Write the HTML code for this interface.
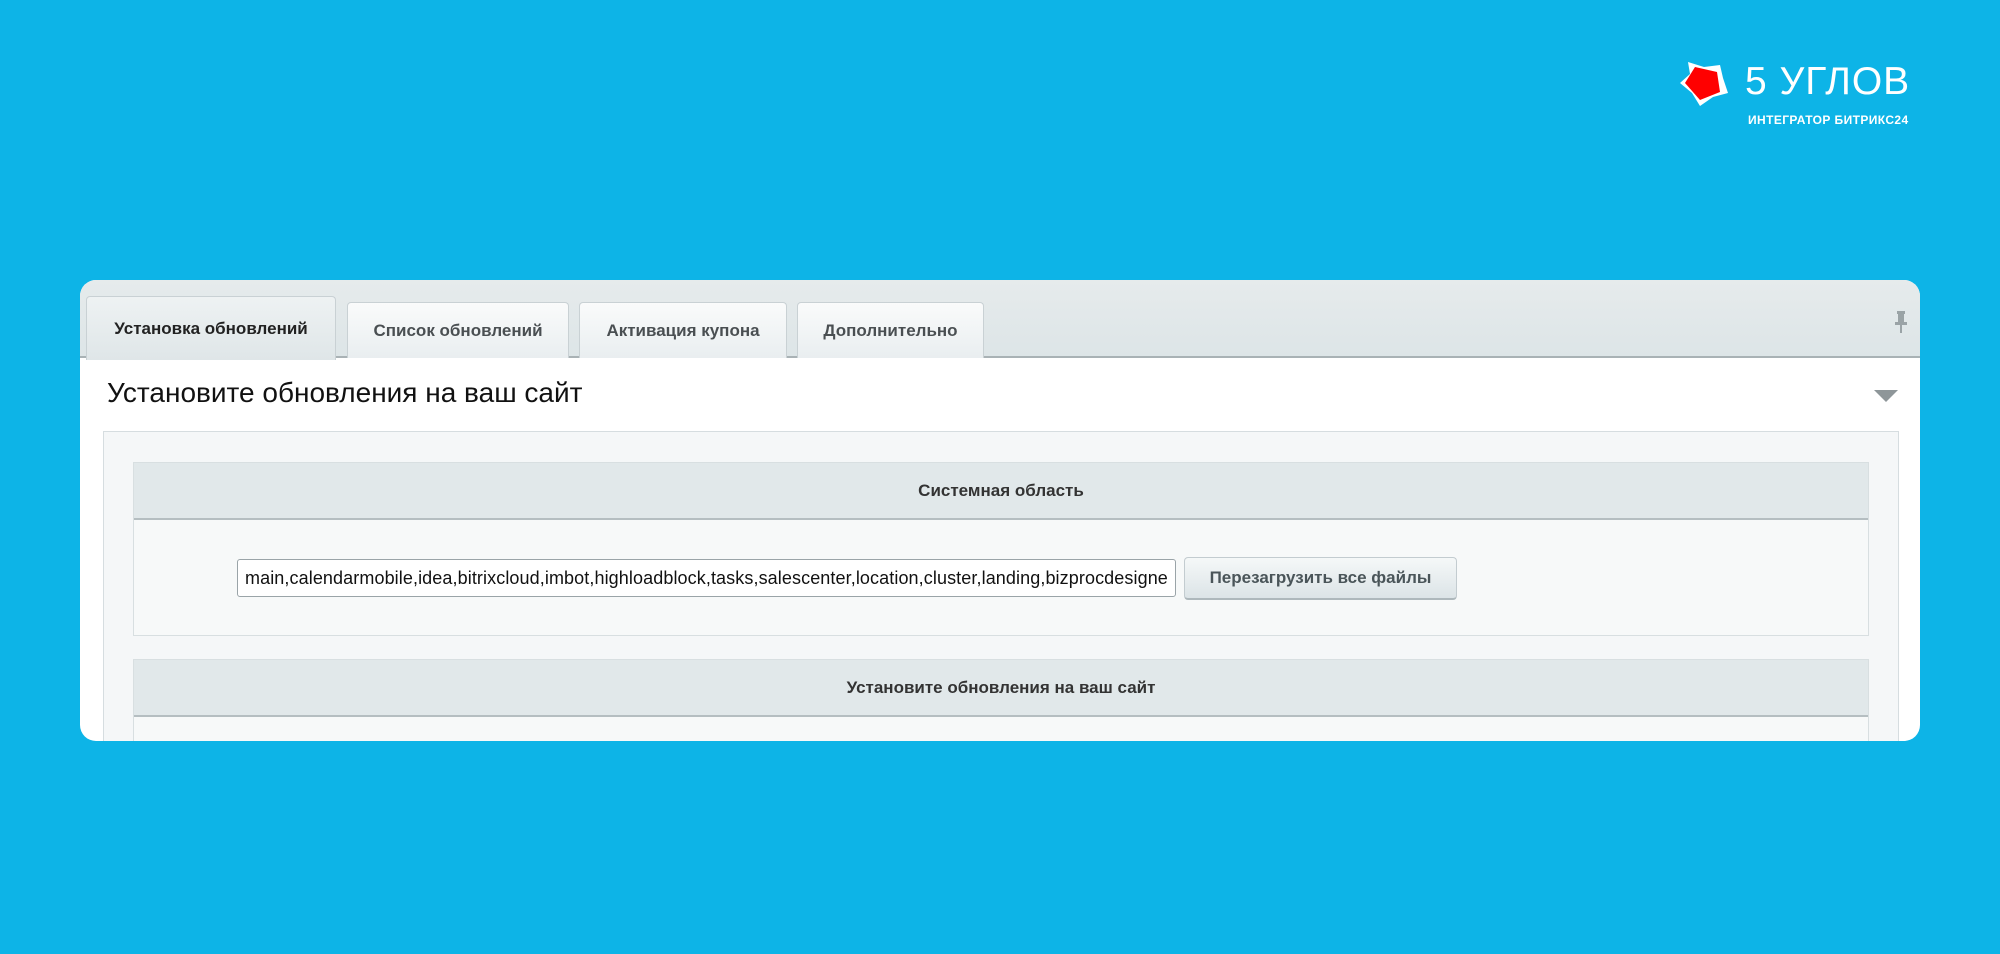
<!DOCTYPE html>
<html><head><meta charset="utf-8"><style>
*{margin:0;padding:0;box-sizing:border-box}
body{width:2000px;height:954px;background:#0db4e7;position:relative;overflow:hidden;font-family:"Liberation Sans",Arial,sans-serif}
.abs{position:absolute}
.card{left:80px;top:280px;width:1840px;height:461px;border-radius:16px;background:#fff;overflow:hidden}
.bar{left:0;top:0;width:1840px;height:78px;background:linear-gradient(#e6ebec,#dde5e7);border-bottom:2px solid #a9b2b5}
.tab{top:22px;height:56px;background:linear-gradient(#fafbfb,#e9eef0);border:1px solid #c9d1d4;border-bottom:none;border-radius:4px 4px 0 0;font-size:17px;font-weight:bold;color:#4a4f52;display:flex;align-items:center;justify-content:center}
.tab.act{top:16px;height:64px;background:linear-gradient(#eef2f3,#dfe6e8);color:#222}
.panel{left:23px;top:151px;width:1796px;height:320px;background:#f5f7f8;border:1px solid #d6dde0}
.sec{left:53px;width:1736px;border:1px solid #d8dfe1;background:#f7f9f9}
.sh{height:57px;background:#e1e8ea;border-bottom:2px solid #b5bec1;font-size:17px;font-weight:bold;color:#333;display:flex;align-items:center;justify-content:center}
</style></head><body>
<svg class="abs" style="left:1679px;top:58px" width="52" height="50" viewBox="0 0 52 50">
<polygon points="9,4 25,9 41,7 44,20 49,35 34,39 21,48 13,35 1,25 11,16" fill="#fff"/>
<polygon points="16,9 38,14 41,34 21,42 6,25" fill="#f00"/>
</svg>
<div class="abs" style="left:1745px;top:60px;font-size:39px;color:#fff;letter-spacing:1px">5 УГЛОВ</div>
<div class="abs" style="left:1748px;top:113px;font-size:12px;font-weight:bold;color:#fff;letter-spacing:0.4px">ИНТЕГРАТОР БИТРИКС24</div>
<div class="abs card">
 <div class="abs bar"></div>
 <div class="abs tab act" style="left:6px;width:250px">Установка обновлений</div>
 <div class="abs tab" style="left:267px;width:222px">Список обновлений</div>
 <div class="abs tab" style="left:499px;width:208px">Активация купона</div>
 <div class="abs tab" style="left:717px;width:187px">Дополнительно</div>
 <svg class="abs" style="left:1814px;top:30px" width="14" height="24" viewBox="0 0 14 24"><rect x="3" y="1" width="8" height="3" fill="#9aa3a6"/><rect x="4" y="4" width="6" height="8" fill="#9aa3a6"/><rect x="1" y="12" width="12" height="3" fill="#9aa3a6"/><rect x="6" y="15" width="2" height="8" fill="#9aa3a6"/></svg>
 <div class="abs" style="left:27px;top:97px;font-size:28px;color:#111">Установите обновления на ваш сайт</div>
 <svg class="abs" style="left:1794px;top:110px" width="24" height="12"><polygon points="0,0 24,0 12,12" fill="#8e9699"/></svg>
 <div class="abs panel"></div>
 <div class="abs sec" style="top:182px;height:174px">
  <div class="sh">Системная область</div>
  <div class="abs" style="left:103px;top:96px;width:939px;height:38px;background:#fff;border:1px solid #9aa4a8;border-radius:3px;font-size:18px;color:#111;line-height:36px;padding-left:7px;overflow:hidden;white-space:nowrap;letter-spacing:0.1px">main,calendarmobile,idea,bitrixcloud,imbot,highloadblock,tasks,salescenter,location,cluster,landing,bizprocdesigne</div>
  <div class="abs" style="left:1050px;top:94px;width:273px;height:43px;background:linear-gradient(#f5f8f8,#dce4e7);border:1px solid #c3ccd0;border-bottom:2px solid #aeb8bc;border-radius:4px;font-size:17px;font-weight:bold;color:#4a5559;display:flex;align-items:center;justify-content:center">Перезагрузить все файлы</div>
 </div>
 <div class="abs sec" style="top:379px;height:120px">
  <div class="sh">Установите обновления на ваш сайт</div>
 </div>
</div>
</body></html>
